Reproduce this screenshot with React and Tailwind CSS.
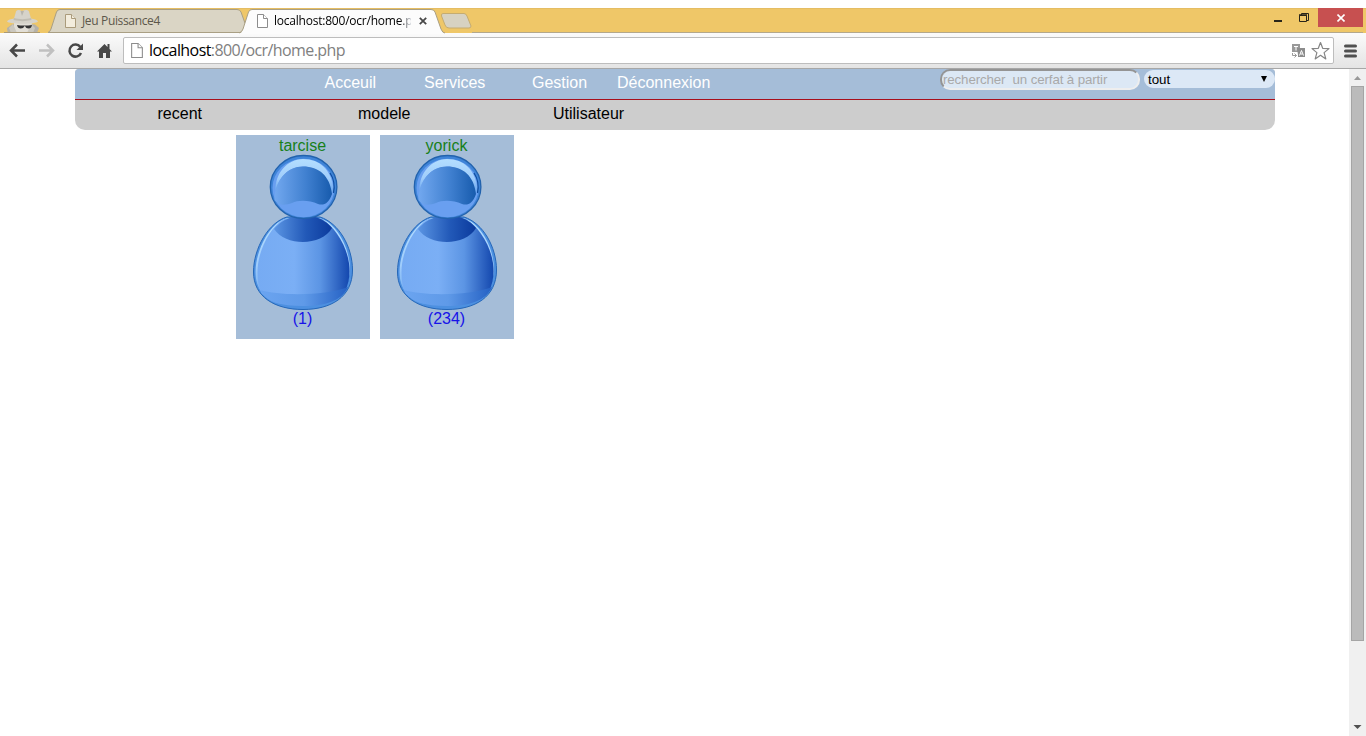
import React from "react";

const PageIcon = ({ className, fill = "#fff", stroke = "#8c8c8c" }) => (
  <svg className={className} viewBox="0 0 11 14" fill={fill} stroke={stroke}>
    <path d="M.5.5h6l4 4v9H.5z" />
    <path d="M6.5.5v4h4" />
  </svg>
);

const Cross = ({ color }) => (
  <svg className="size-2 shrink-0" viewBox="0 0 8 8" stroke={color} strokeWidth="1.8">
    <path d="M.8.8l6.4 6.4M7.2.8L.8 7.2" />
  </svg>
);

function Incognito() {
  return (
    <svg className="ml-1 h-6 w-9 shrink-0" viewBox="4 9 36 24">
      <path d="M8 33c-1-3-1-4-1-5l5-3.500 4-.5h15l4 .5 4 3.500-2 5z" fill="#b5b2a9" />
      <path d="M14 22h18l-1 8-3 3H17l-3-3z" fill="#e2dfd7" />
      <path d="M11 33l-2-5 4-4 4 9zM33 33l2-5-4-4-4 9z" fill="#cbc8bf" />
      <path d="M7 21.500c1-2 4-2.500 7-3l2-7c1-2 3-2 6-.5 4-1.500 6-1.500 7 .5l2 7c3 .5 6 1 7 3-2 3-29 3-31 0z" fill="#d6d3ca" />
      <path d="M14 18c5 1.500 12 1.500 17 0l.5 2c-6 1.500-12 1.500-18 0z" fill="#c0bdb3" />
      <path d="M20.500 11l1.500 5 2-5z" fill="#b9b6ad" />
      <path d="M17 25c4 .8 10 .8 15 0-.3 2.500-1.700 3.500-3.500 3.500-1.600 0-2.800-1-3.300-2.300h-1c-.5 1.300-1.500 2.300-3.500 2.300-1.800 0-3.300-1-3.700-3.500z" fill="#353535" />
      <path d="M4 32.500h36" stroke="#a99a78" />
    </svg>
  );
}

function TabStrip() {
  return (
    <div className="flex h-[25px] shrink-0 border-t border-[#e5bd63] bg-[#efc768]">
      <Incognito />
      <div className="relative ml-2 flex h-6 w-[199px] shrink-0 items-center pl-[17px]">
        <svg className="absolute inset-0 h-6 w-[199px]" viewBox="0 0 199 24">
          <path d="M0 23.500Q2 23 3 20L8.500 3Q9.500 .5 12 .5H189Q192 .5 193 3L198 17 194 23.500Z" fill="#dad5c5" stroke="#a99f84" />
        </svg>
        <PageIcon className="relative h-[14px] w-[11px]" fill="#f3eddd" stroke="#aa9b7b" />
        <span className="relative ml-[6px] w-[145px] font-['Open_Sans','Noto_Sans',sans-serif] text-[12px] leading-4 tracking-[-0.35px] text-[#5d584b]">Jeu Puissance4</span>
        <Cross color="#6c6759" />
      </div>
      <div className="relative -ml-[8px] flex h-[25px] w-[206px] shrink-0 items-center pb-px pl-[18px]">
        <svg className="absolute inset-0 h-[25px] w-[206px]" viewBox="0 0 206 25">
          <path d="M0 25Q3 24 4 20L9.500 3Q10.500 .5 13 .5H192Q195 .5 196 3L202 20Q203.500 24 206 25Z" fill="#fcfcfc" />
          <path d="M0 24Q3 23 4 20L9.500 3Q10.500 .5 13 .5H192Q195 .5 196 3L202 20Q203.500 24 206 24" fill="none" stroke="#a99f84" />
        </svg>
        <PageIcon className="relative h-[14px] w-[11px] shrink-0" />
        <span className="relative ml-[6px] w-[137px] shrink-0 overflow-hidden whitespace-nowrap bg-gradient-to-r from-black from-90% to-gray-300 bg-clip-text font-['Open_Sans','Noto_Sans',sans-serif] text-[12px] leading-4 tracking-[-0.22px] text-transparent">localhost:800/ocr/home.php</span>
        <span className="relative ml-2 flex"><Cross color="#484848" /></span>
      </div>
      <svg className="-ml-[5px] mt-[3px] h-[18px] w-8 shrink-0" viewBox="0 0 32 18">
        <path d="M3 1.500H24Q26 1.500 27 4L31 14Q31 16 29 16H9Q6 16 5 13L1.500 4Q1 1.500 3 1.500Z" fill="#d7d2c2" stroke="#c5ac70" />
      </svg>
      <div className="flex min-w-0 flex-1 items-end border-b border-[#b3a88c]" />
      <div className="mr-[3px] flex border-b border-[#b3a88c]">
        <svg className="h-5 w-[46px]" viewBox="1272 8 46 20" fill="none" stroke="#292519">
          <path d="M1274 20h8" strokeWidth="2" />
          <path d="M1299.500 14.500h7v6h-7zM1301.500 14v-1.500h7v7H1307" />
          <path d="M1299 14h8" strokeWidth="1.500" />
        </svg>
        <div className="-mt-px flex h-[19px] w-[45px] items-center justify-center bg-[#c75050]">
          <svg className="size-2" viewBox="0 0 8 8" stroke="#fff" strokeWidth="1.600"><path d="M.5.5l7 7M7.500.5l-7 7" /></svg>
        </div>
      </div>
    </div>
  );
}

function Toolbar() {
  return (
    <div className="flex h-9 shrink-0 items-center border-b border-[#a7a7a7] bg-gradient-to-b from-[#fbfbfb] to-[#e4e4e4]">
      <svg className="h-9 w-[123px] shrink-0" viewBox="0 33 123 36" fill="none">
        <path d="M25 50.500H11M17 44.500l-6 6 6 6" stroke="#484848" strokeWidth="2.500" />
        <path d="M39 50.500h14M47 44.500l6 6-6 6" stroke="#c0c0c0" strokeWidth="2.500" />
        <path d="M80.300 47A6 6 0 1 0 81 53" stroke="#484848" strokeWidth="2.500" />
        <path d="M83 43.500v6.500h-6.500z" fill="#484848" />
        <path d="M97 51.500l7.500-7.500 3 3v-3h2v5l2.500 2.500h-2V58h-4v-5h-3v5h-4v-6.500z" fill="#484848" />
      </svg>
      <div className="flex h-[27px] w-[1211px] items-center rounded-[2px] border border-[#bdbdbd] bg-white pl-[7px]">
        <PageIcon className="h-[15px] w-3" />
        <span className="-mt-px ml-[6px] font-['Open_Sans','Noto_Sans',sans-serif] text-[16px] leading-6 tracking-[-0.58px] text-[#808080]">
          <span className="text-black">localhost</span>:800/ocr/home.php
        </span>
        <svg className="ml-auto mr-[2px] h-5 w-10" viewBox="1291 41 40 20">
          <path d="M1292 44h8v4h-2v4h-6z" fill="#999" />
          <path d="M1294 46.500h4M1296 46.500v4" stroke="#fff" />
          <path d="M1297 48h8v9h-7v-2z" fill="#8c8c8c" />
          <path d="M1299.500 55.500l2-5 2 5M1300.500 54h2" stroke="#fff" fill="none" />
          <path d="M1292.500 53v2.500h4M1294.500 53.500l2 2-2 2" stroke="#999" fill="none" />
          <path d="M1320.500 42.500l2.200 5.800 6.300.3-4.900 4 1.700 6.300-5.300-3.600-5.300 3.600 1.700-6.300-4.900-4 6.300-.3z" fill="#fff" stroke="#858585" strokeWidth="1.200" strokeLinejoin="round" />
        </svg>
      </div>
      <svg className="ml-[10px] h-[14px] w-[13px]" viewBox="0 0 13 14" stroke="#505050" strokeWidth="3" strokeLinecap="round">
        <path d="M1.500 2h10M1.500 7h10M1.500 12h10" />
      </svg>
    </div>
  );
}

function Person({ id }) {
  const g = (name) => `${name}-${id}`;
  const url = (name) => `url(#${name}-${id})`;
  return (
    <svg className="h-[157px] w-[102px]" viewBox="252 154 102 157">
      <defs>
        <linearGradient id={g("body")}>
          <stop offset="0" stopColor="#76abf3" /><stop offset=".4" stopColor="#7baff5" />
          <stop offset=".68" stopColor="#5c95e4" /><stop offset="1" stopColor="#1347ae" />
        </linearGradient>
        <linearGradient id={g("face")}>
          <stop offset="0" stopColor="#72a8ef" /><stop offset=".55" stopColor="#4080d0" /><stop offset="1" stopColor="#175bad" />
        </linearGradient>
        <linearGradient id={g("neck")}>
          <stop offset="0" stopColor="#5b95e3" /><stop offset=".55" stopColor="#2259b8" /><stop offset="1" stopColor="#0b3a9d" />
        </linearGradient>
        <linearGradient id={g("shine")} x2="0" y2="1">
          <stop offset="0" stopColor="#b4deff" /><stop offset=".55" stopColor="#a0cdfb" /><stop offset="1" stopColor="#5f9deb" />
        </linearGradient>
        <linearGradient id={g("base")}>
          <stop offset="0" stopColor="#6ba4f0" /><stop offset=".5" stopColor="#5f9ae8" /><stop offset="1" stopColor="#2561c4" />
        </linearGradient>
      </defs>
      <path d="M287 217C269 222 253.500 248 253.500 272C253.500 297 275 309.500 303 309.500C331 309.500 352.500 297 352.500 270C352.500 247 339 223 320 217Z" fill="#4d90e0" stroke="#2567b8" />
      <path d="M286 218.500C270 223 255.500 250 255.500 272C255.500 289 265 301 280 304C335 309 349 289 350 270C350 248 337 224 321 218.500Z" fill={url("shine")} />
      <path d="M284 219C269 228 257.500 252 257.500 272C257.500 282 259 288 262 294C282 300 325 300 345 291C358 265 341 231 322 219Z" fill={url("body")} />
      <path d="M260 290C280 296 325 296 348 287C342 301 325 306 303 306C281 306 267 302 260 290Z" fill={url("base")} />
      <path d="M274 229C279 223 285 219 293 217H315C322 219 328 223 332 228C322 246 286 247 274 229Z" fill={url("neck")} />
      <ellipse cx="303.600" cy="187" rx="33.300" ry="31.500" fill="#3f84d8" stroke="#2262ad" strokeWidth="1.300" />
      <ellipse cx="303.500" cy="188" rx="31" ry="29.300" fill="#699ff0" />
      <path d="M275.500 191C275 173 287 159.500 303 159C320 159 332 170 333.500 190L331 194C328 175 316 166.500 303 166.500C290 166.500 280 175 275.500 191Z" fill={url("shine")} />
      <path d="M274.500 200C275 180 287 166.500 303 166.500C319 166.500 330 176 332 194C329 203 324 206 318 204C309 200 298 200 292 203C284 206 278 205 274.500 200Z" fill={url("face")} />
      <path d="M330 173C334 179 335 186 333.500 193" stroke="#0d4c9e" strokeWidth="1.200" fill="none" />
    </svg>
  );
}

function PersonCard({ id, name, count }) {
  return (
    <div className="flex h-[204px] w-[134px] flex-col items-center bg-[#a5bdd8] pt-[2px] text-[16px] leading-[18px]">
      <span className="-ml-px h-[17px] text-[#178018]">{name}</span>
      <Person id={id} />
      <span className="-ml-px -mt-px text-[#1712e8]">({count})</span>
    </div>
  );
}

function Site() {
  return (
    <div className="flex-1 pl-[75px] font-['Liberation_Sans',Arial,sans-serif] text-[16px]">
      <div className="h-[61px] w-[1200px] overflow-hidden rounded-t-[4px] rounded-b-[10px] bg-[#cdcdcd]">
        <div className="flex h-[30px] bg-[#a5bdd8] leading-[18px] text-white">
          <nav className="flex pl-[249.5px] pt-[5px]">
            <a className="w-[99.5px]">Acceuil</a>
            <a className="w-[108px]">Services</a>
            <a className="w-[85px]">Gestion</a>
            <a>Déconnexion</a>
          </nav>
          <div className="ml-auto flex gap-1 text-[13.333px]">
            <div className="h-[21px] w-[200px] whitespace-pre rounded-[10px] border-2 border-t-[#949494] border-r-[#eee] border-b-[#eee] border-l-[#949494] bg-[#dce8f5] pl-px leading-[17px] tracking-[-0.13px] text-[#a9a9a9]">rechercher  un cerfat à partir</div>
            <div className="mt-px flex h-[18px] w-[131px] items-center justify-between rounded-[9px] bg-[#dce8f6] pl-1 pr-[8px] text-black">
              <span className="pt-px">tout</span>
              <svg className="h-[6px] w-[6px]" viewBox="0 0 6 6"><path d="M0 0h6L3 6z" /></svg>
            </div>
          </div>
        </div>
        <div className="h-px bg-[#a80f1c]" />
        <nav className="flex pl-[82.5px] pt-[5px] leading-[18px] text-black">
          <a className="w-[200.5px]">recent</a>
          <a className="w-[195px]">modele</a>
          <a>Utilisateur</a>
        </nav>
      </div>
      <div className="ml-[161px] mt-[5px] flex gap-[10px]">
        <PersonCard id="a" name="tarcise" count="1" />
        <PersonCard id="b" name="yorick" count="234" />
      </div>
    </div>
  );
}

function Scrollbar() {
  return (
    <div className="flex w-[17px] shrink-0 flex-col items-center bg-[#f0f0f0]">
      <svg className="h-[17px] w-[17px] shrink-0" viewBox="0 0 17 17"><path d="M5 11h7L8.500 7z" fill="#999" /></svg>
      <div className="h-[555px] w-[13px] border border-[#a5a5a5] bg-[#bbb]" />
      <svg className="mt-auto h-[17px] w-[17px] shrink-0" viewBox="0 0 17 17"><path d="M4.500 6h8l-4 4z" fill="#505050" /></svg>
    </div>
  );
}

export default function App() {
  return (
    <div className="flex h-[736px] w-[1366px] flex-col overflow-hidden bg-white pt-2">
      <TabStrip />
      <Toolbar />
      <div className="flex min-h-0 flex-1">
        <Site />
        <Scrollbar />
      </div>
    </div>
  );
}
